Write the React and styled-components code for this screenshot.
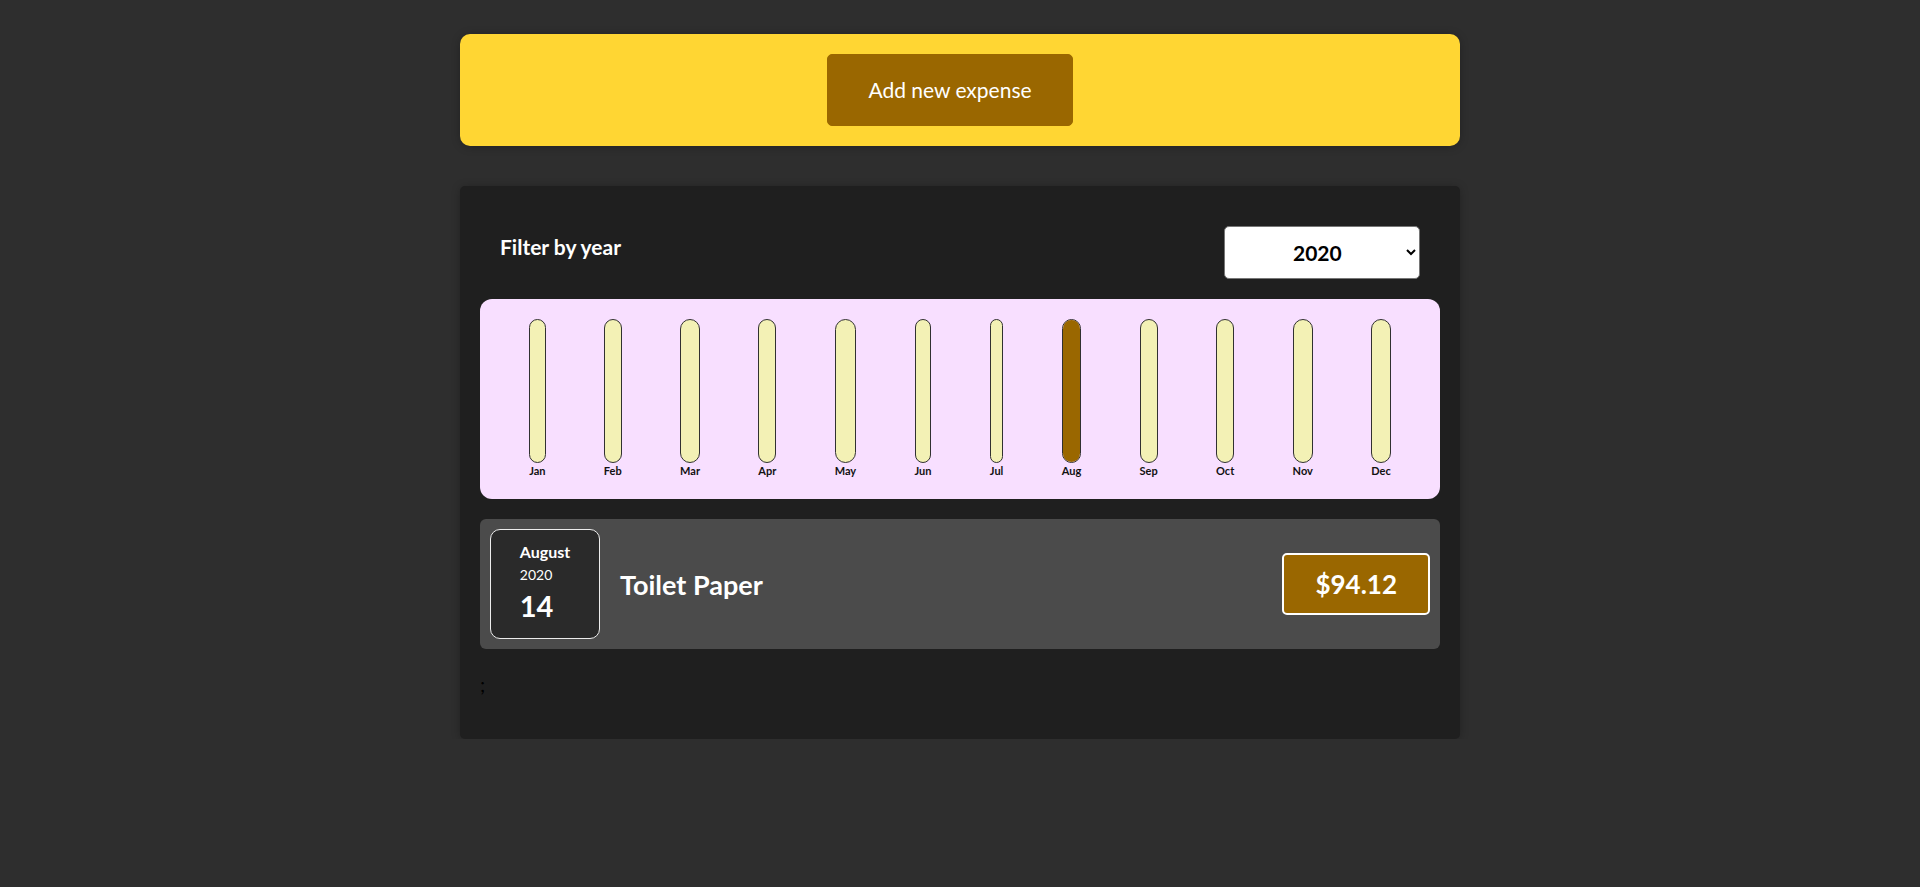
import styled, { createGlobalStyle } from 'styled-components'

const GlobalStyle = createGlobalStyle`
  * { box-sizing: border-box; }
  body {
    margin: 0;
    background: #2e2e2e;
    font-family: Lato, "Noto Sans", sans-serif;
  }
`

const MONTHS = ['Jan','Feb','Mar','Apr','May','Jun','Jul','Aug','Sep','Oct','Nov','Dec']

const expenses = [
  { id: 'e1', title: 'Toilet Paper', amount: 94.12, date: new Date(2020, 7, 14) },
]

const App = () => {
  const values = MONTHS.map((_, i) =>
    expenses.filter((e) => e.date.getMonth() === i).reduce((s, e) => s + e.amount, 0)
  )
  const max = Math.max(...values)

  return (
    <>
      <GlobalStyle />
      <NewExpense>
        <AddButton>Add new expense</AddButton>
      </NewExpense>

      <Expenses>
        <Filter>
          <FilterLabel>Filter by year</FilterLabel>
          <YearSelect defaultValue="2020">
            <option value="2022">2022</option>
            <option value="2021">2021</option>
            <option value="2020">2020</option>
            <option value="2019">2019</option>
          </YearSelect>
        </Filter>

        <Chart>
          {MONTHS.map((m, i) => (
            <ChartBar key={m}>
              <BarInner>
                <BarFill style={{ height: max > 0 ? `${Math.round((values[i] / max) * 100)}%` : '0%' }} />
              </BarInner>
              <BarLabel>{m}</BarLabel>
            </ChartBar>
          ))}
        </Chart>

        <ExpenseList>
          {expenses.map((e) => (
            <ExpenseItem key={e.id}>
              <DateBox>
                <DateLines>
                  <Month>{e.date.toLocaleString('en-US', { month: 'long' })}</Month>
                  <Year>{e.date.getFullYear()}</Year>
                  <Day>{e.date.getDate()}</Day>
                </DateLines>
              </DateBox>
              <Description>
                <Title>{e.title}</Title>
                <Price>${e.amount}</Price>
              </Description>
            </ExpenseItem>
          ))}
        </ExpenseList>
        <Trailing>;</Trailing>
      </Expenses>
    </>
  )
}

export default App

const NewExpense = styled.div`
  width: 1000px;
  margin: 34px auto 40px;
  padding: 20px;
  background: #ffd633;
  border-radius: 10px;
  text-align: center;
  box-shadow: 0 1px 8px rgba(0, 0, 0, 0.25);
`

const AddButton = styled.button`
  font-family: Lato, "Noto Sans", sans-serif;
  font-size: 21px;
  line-height: 30px;
  color: #fff;
  background: #9a6700;
  border: 1px solid #9a6700;
  border-radius: 5px;
  padding: 20px 40px;
  margin-right: 20px;
  cursor: pointer;
`

const Expenses = styled.div`
  width: 1000px;
  margin: 0 auto;
  padding: 20px;
  background: #1f1f1f;
  border-radius: 5px;
  box-shadow: 0 1px 8px rgba(0, 0, 0, 0.25);
`

const Filter = styled.div`
  display: flex;
  align-items: center;
  justify-content: space-between;
  margin: 20px 0;
  padding: 0 20px;
  color: #fff;
`

const FilterLabel = styled.label`
  font-weight: 700;
  font-size: 21px;
  margin-bottom: 12px;
`

const YearSelect = styled.select`
  font-family: Lato, "Noto Sans", sans-serif;
  font-weight: 700;
  font-size: 21px;
  width: 196px;
  height: 53px;
  padding: 0 60px 0 64px;
  background: #fff;
  color: #000;
  border: 1px solid #767676;
  border-radius: 5px;
`

const Chart = styled.div`
  display: flex;
  justify-content: space-around;
  height: 200px;
  padding: 20px;
  background: #f8dfff;
  border-radius: 12px;
`

const ChartBar = styled.div`
  height: 100%;
  display: flex;
  flex-direction: column;
  align-items: center;
`

const BarInner = styled.div`
  flex: 1;
  width: 100%;
  display: flex;
  flex-direction: column;
  justify-content: flex-end;
  border: 1px solid #313131;
  border-radius: 12px;
  background: #f3f1b5;
  overflow: hidden;
`

const BarFill = styled.div`
  width: 100%;
  background: #9a6700;
`

const BarLabel = styled.div`
  font-size: 11px;
  line-height: 16px;
  font-weight: 700;
  color: #111;
`

const ExpenseList = styled.ul`
  list-style: none;
  margin: 0;
  padding: 0;
`

const ExpenseItem = styled.li`
  display: flex;
  align-items: center;
  padding: 10px;
  margin: 20px 0;
  background: #4b4b4b;
  border-radius: 6px;
`

const DateBox = styled.div`
  width: 110px;
  height: 110px;
  display: flex;
  align-items: center;
  justify-content: center;
  border: 1px solid #ececec;
  border-radius: 10px;
  background: #2a2a2a;
  color: #fff;
`

const DateLines = styled.div`
  display: flex;
  flex-direction: column;
  align-items: flex-start;
  padding-bottom: 4px;
`

const Month = styled.div`
  font-size: 16px;
  line-height: 22px;
  font-weight: 700;
`

const Year = styled.div`
  font-size: 14px;
  line-height: 23px;
`

const Day = styled.div`
  font-size: 29px;
  line-height: 36px;
  font-weight: 700;
  margin-top: 2px;
`

const Description = styled.div`
  flex: 1;
  display: flex;
  align-items: center;
`

const Title = styled.h2`
  flex: 1;
  margin: 0 20px;
  font-size: 27px;
  font-weight: 700;
  color: #fff;
`

const Price = styled.div`
  font-size: 26px;
  line-height: 38px;
  font-weight: 700;
  color: #fff;
  background: #9a6700;
  border: 2px solid #fff;
  border-radius: 5px;
  padding: 10px 31px;
`

const Trailing = styled.p`
  margin: 0 0 19px;
  font-size: 20px;
  line-height: 31px;
  color: #000;
`
